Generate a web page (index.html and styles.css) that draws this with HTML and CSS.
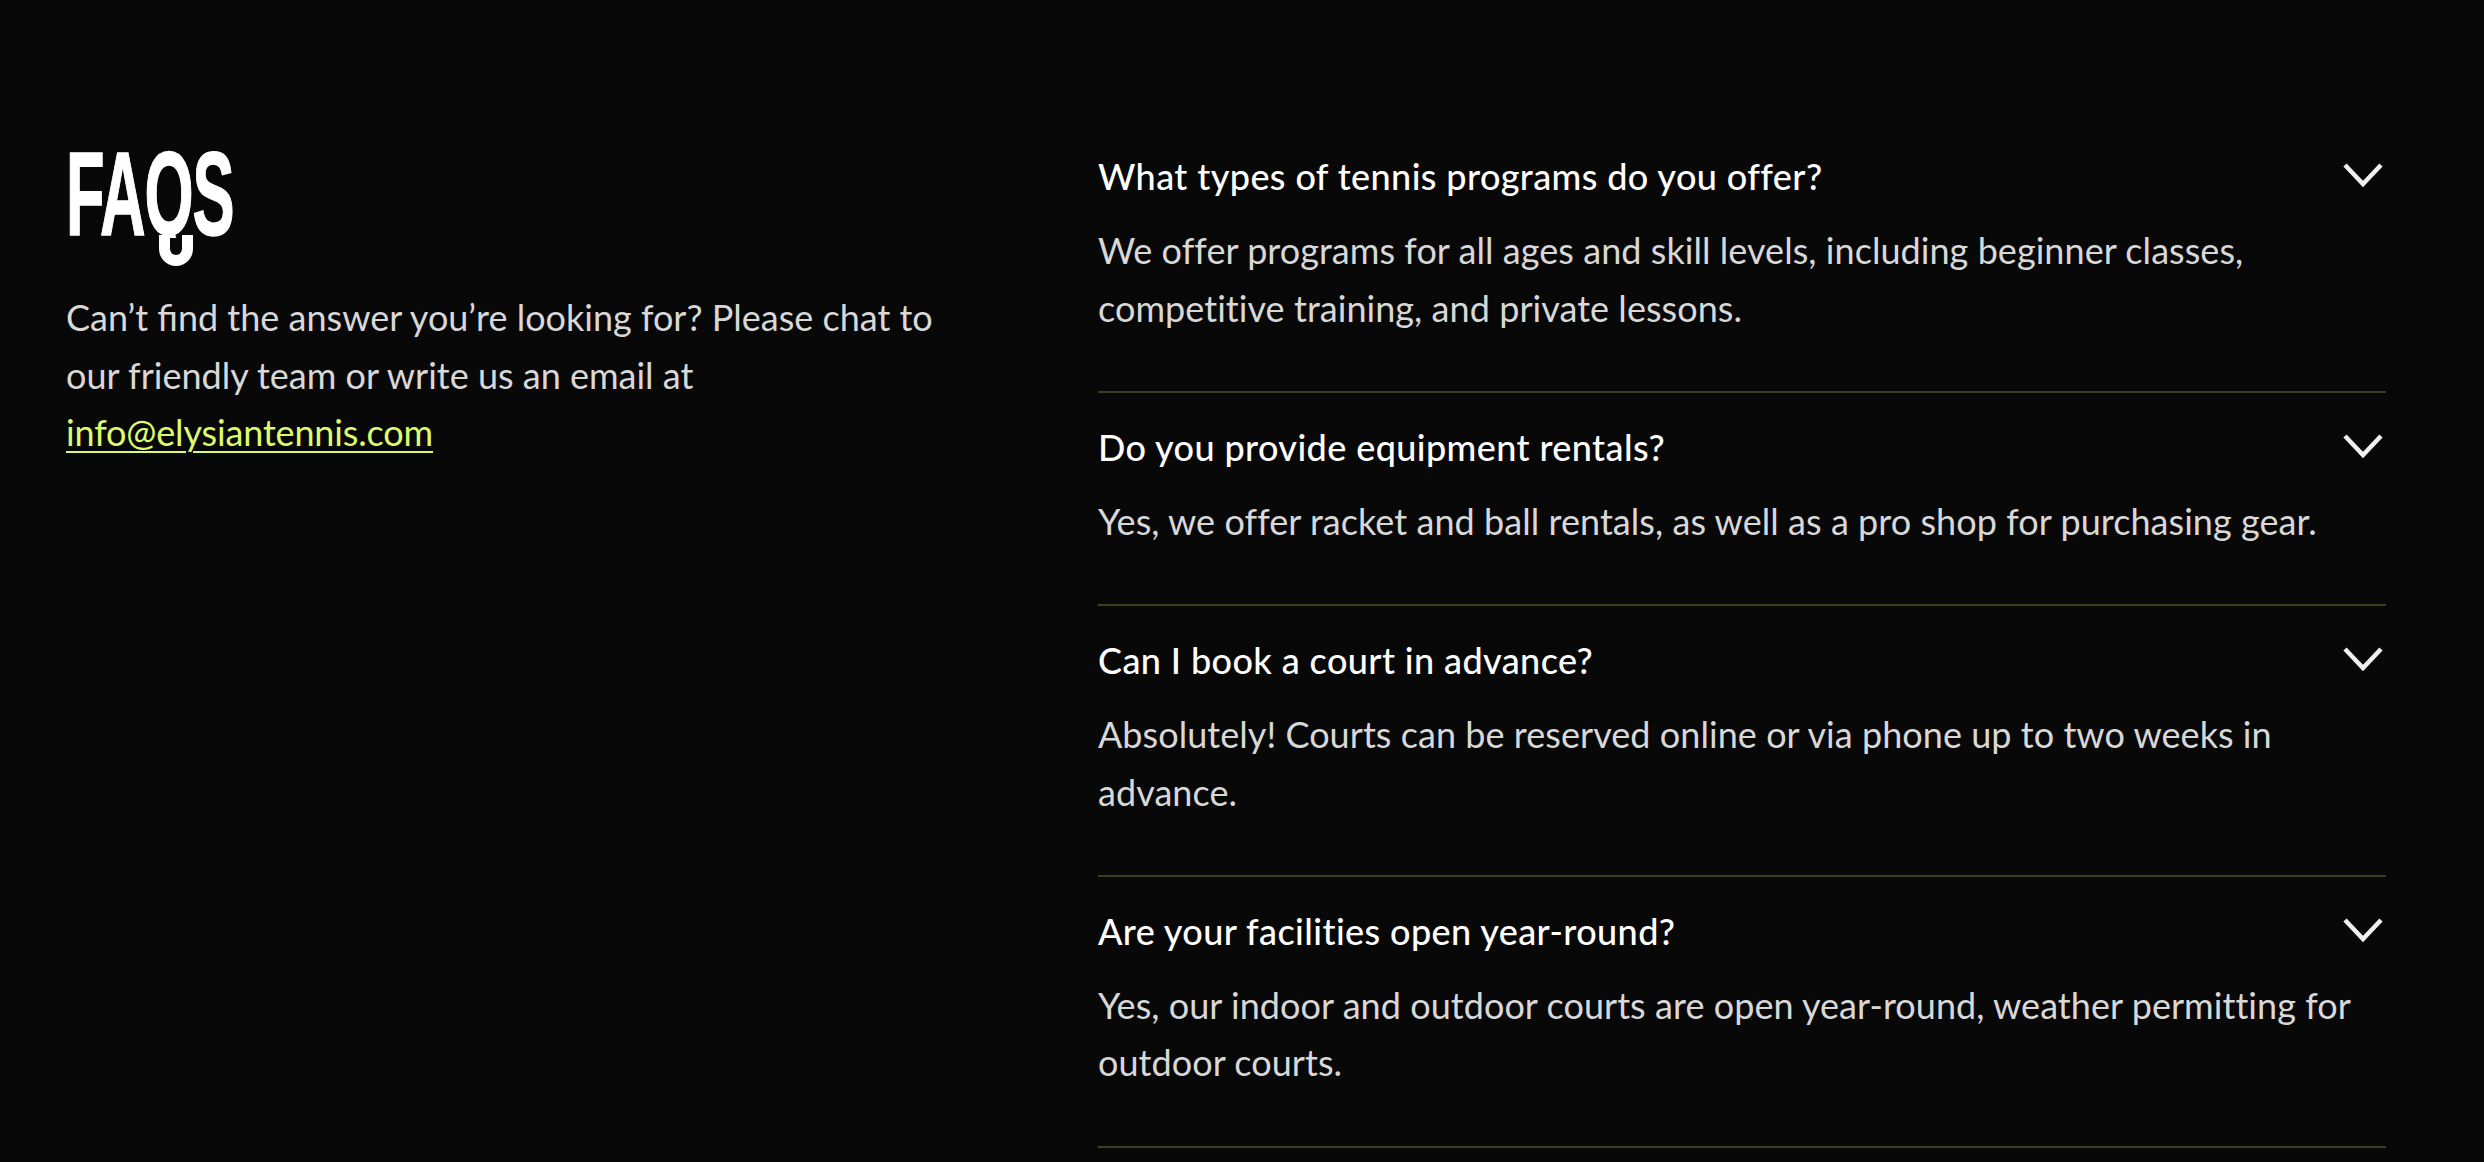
FILE: index.html
```html
<!DOCTYPE html>
<html lang="en">
  <head>
    <meta charset="UTF-8" />
    <title>FAQs</title>
    <link rel="stylesheet" href="styles.css">
  </head>
  <body>
    <section class="faq">
      <div class="faq-intro">
        <h1 class="faq-title"><span>FAQS</span></h1>
        <p class="faq-text">Can’t find the answer you’re looking for? Please chat to our friendly team or write us an email at <a href="#">info@elysiantennis.com</a></p>
      </div>

      <div class="faq-list">
        <div class="faq-item">
          <div class="faq-question">
            <h3>What types of tennis programs do you offer?</h3>
            <svg class="chevron" viewBox="0 0 40 25"><path d="M2 2 L20 21 L38 2" /></svg>
          </div>
          <p class="faq-answer">We offer programs for all ages and skill levels, including beginner classes, competitive training, and private lessons.</p>
        </div>
        <div class="faq-item">
          <div class="faq-question">
            <h3>Do you provide equipment rentals?</h3>
            <svg class="chevron" viewBox="0 0 40 25"><path d="M2 2 L20 21 L38 2" /></svg>
          </div>
          <p class="faq-answer">Yes, we offer racket and ball rentals, as well as a pro shop for purchasing gear.</p>
        </div>
        <div class="faq-item">
          <div class="faq-question">
            <h3>Can I book a court in advance?</h3>
            <svg class="chevron" viewBox="0 0 40 25"><path d="M2 2 L20 21 L38 2" /></svg>
          </div>
          <p class="faq-answer">Absolutely! Courts can be reserved online or via phone up to two weeks in advance.</p>
        </div>
        <div class="faq-item">
          <div class="faq-question">
            <h3>Are your facilities open year-round?</h3>
            <svg class="chevron" viewBox="0 0 40 25"><path d="M2 2 L20 21 L38 2" /></svg>
          </div>
          <p class="faq-answer">Yes, our indoor and outdoor courts are open year-round, weather permitting for outdoor courts.</p>
        </div>
      </div>
    </section>
  </body>
</html>
```

FILE: styles.css
```css
* {
  margin: 0;
  padding: 0;
  box-sizing: border-box;
}
html, body {
  height: 100%;
  overflow: hidden;
}
body {
  background-color: #080808;
  color: #d8d8d8;
  font-family: "Lato", "Liberation Sans", sans-serif;
  font-size: 36px;
  line-height: 57.6px;
}
.faq {
  display: grid;
  grid-template-columns: 1032px 1288px;
  padding: 148px 98px 0 66px;
}

/* left column */
.faq-title {
  position: relative;
  height: 141px;
  font-family: "Liberation Sans", sans-serif;
  font-size: 119px;
  font-weight: 700;
  line-height: 92px;
  color: #fff;
}
.faq-title span {
  display: block;
  height: 90px;
  letter-spacing: -2px;
  -webkit-text-stroke: 1.5px #fff;
  transform: scaleX(0.53);
  transform-origin: left top;
  /* cut off the font's own Q tail */
  clip-path: inset(-10px -10px 0 -10px);
}
/* tail of the Q */
.faq-title::after {
  content: "";
  position: absolute;
  box-sizing: border-box;
  left: 93px;
  top: 87px;
  width: 34px;
  height: 31px;
  border: 11px solid #fff;
  border-top: 0;
  border-radius: 0 0 17px 17px;
}
.faq-text {
  width: 900px;
}
.faq-text a {
  color: #dcfb6e;
  letter-spacing: -0.15px;
  text-decoration: underline;
  text-decoration-thickness: 2px;
  text-underline-offset: 5px;
}

/* right column */
.faq-item {
  padding: 0 0 53.5px;
  margin-bottom: 26px;
  border-bottom: 2px solid #3a3f1f;
}
.faq-question {
  display: flex;
  justify-content: space-between;
  align-items: center;
  margin-bottom: 16.5px;
}
.faq-question h3 {
  font-size: 36px;
  font-weight: 500;
  letter-spacing: 0.4px;
  color: #fff;
}
.faq-answer {
  letter-spacing: 0.05px;
}
.chevron {
  width: 40px;
  height: 25px;
  margin: 0 3px 3px 0;
  fill: none;
  stroke: #f0f0f0;
  stroke-width: 4.5;
}
```
